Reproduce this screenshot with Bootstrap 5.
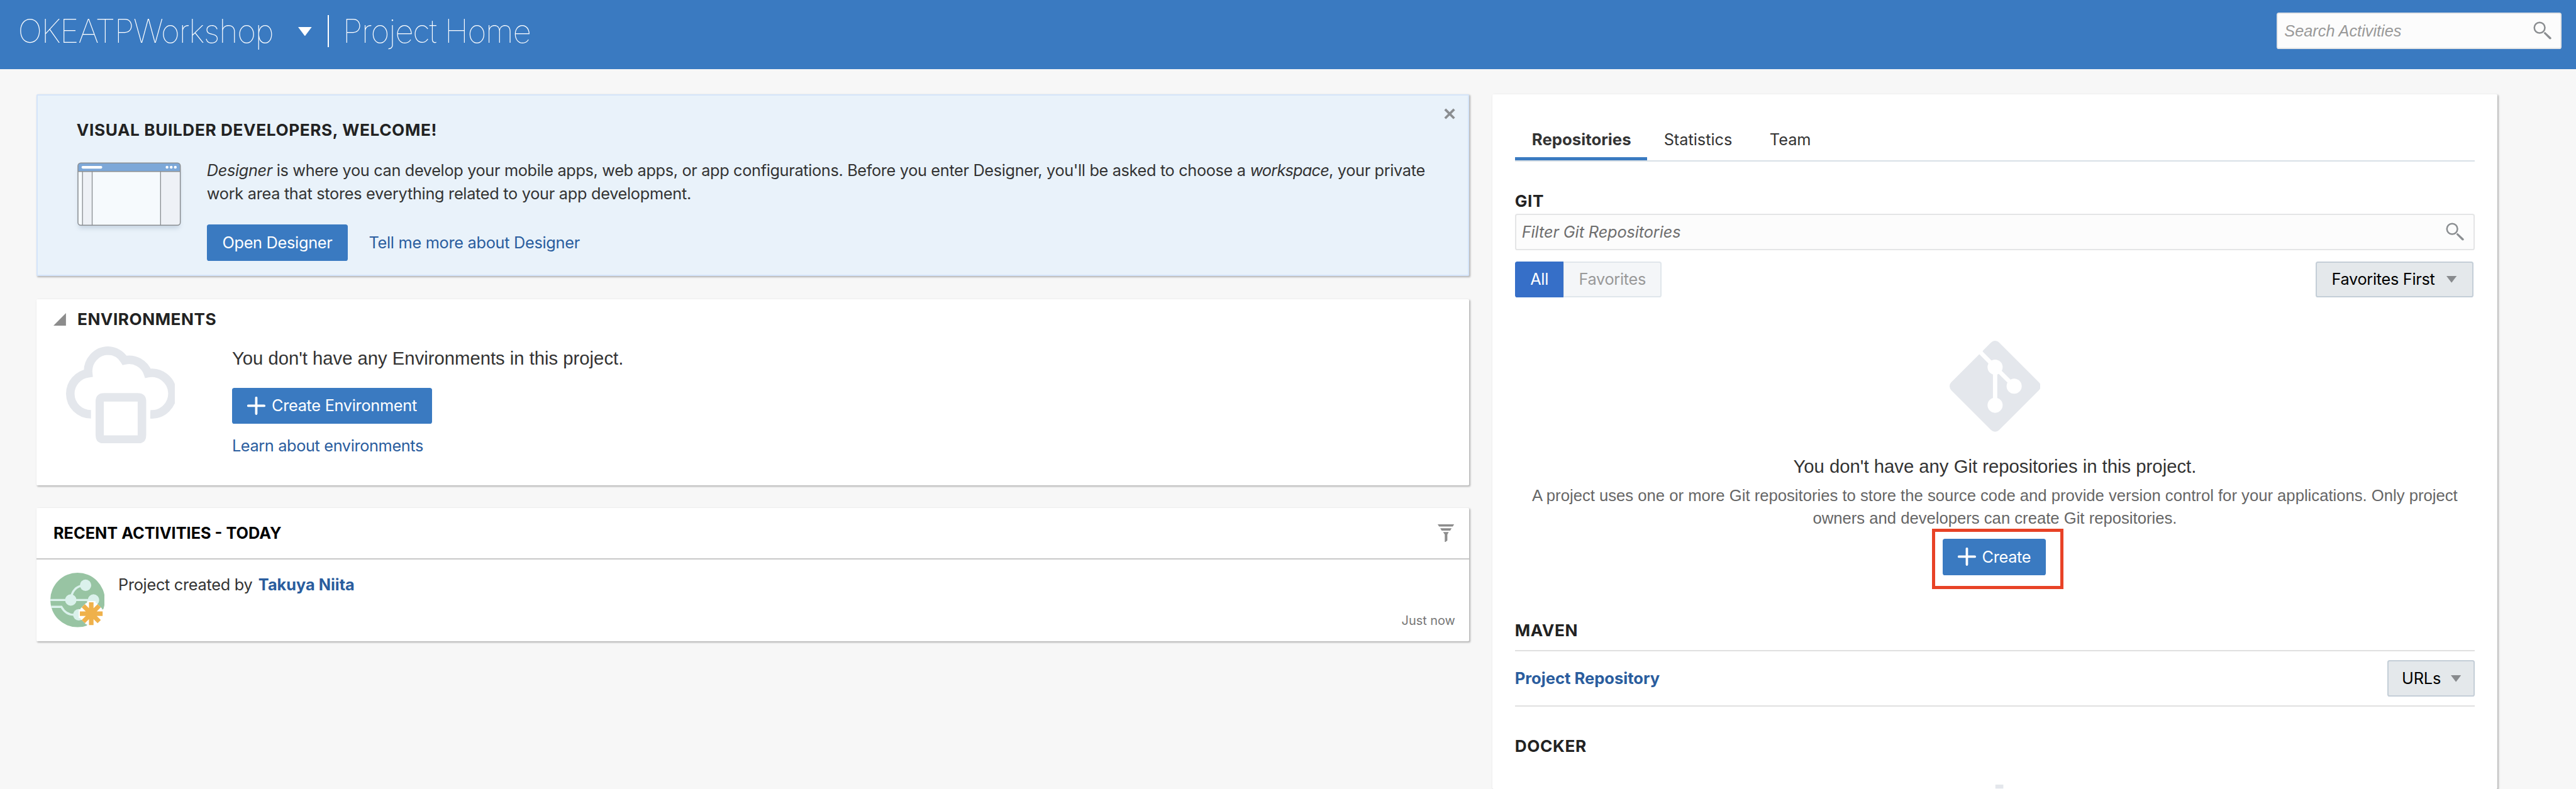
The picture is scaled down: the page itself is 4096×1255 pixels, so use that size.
<!DOCTYPE html>
<html lang="en">
<head>
<meta charset="utf-8">
<meta name="viewport" content="width=device-width, initial-scale=1">
<title>OKEATPWorkshop | Project Home</title>
<link href="https://cdn.jsdelivr.net/npm/bootstrap@5.3.0/dist/css/bootstrap.min.css" rel="stylesheet">
<style>
/* 1rem is 1/453 of the window width, so the whole page scales with it */
html{font-size:calc(100vw / 453)}
body{font:400 2.8rem/4rem Inter,"Liberation Sans",sans-serif;letter-spacing:-.032rem;color:#333;background:#f7f7f7;height:100vh;overflow:hidden}
svg{display:block;flex:none}
a{color:#2a5d9e;text-decoration:none}
.helv{font-family:"Liberation Sans",Arial,sans-serif;letter-spacing:0}

.topbar{height:12.2rem;background:#3a7ac1;padding:0 2.6rem 0 3.15rem;color:#fff}
.brand{gap:2.8rem;height:11rem}
.thin{font-weight:100;font-size:5.7rem;line-height:7.6rem;letter-spacing:-.135rem}
.vrule{width:2px;height:5.6rem;background:#fff}
.field{height:6.4rem;border:2px solid #e4e5e6;border-radius:.4rem;background:#fcfcfc;color:#6e6e6e;font-style:italic;padding:0 1.7rem 0 1rem}
.search{width:50rem;margin-top:2.2rem;color:#999;padding:0 1.5rem 0 1.1rem}

.page{padding:4.4rem 13.8rem 0 6.4rem;gap:4rem}
.main-col{width:252rem;gap:4rem}
.side-col{width:176.8rem;height:122.2rem;padding:4.96rem 4rem 0;overflow:hidden}
.panel{background:#fff;border-radius:.2rem;box-shadow:.2rem .2rem .3rem rgba(0,0,0,.27)}
.ttl{font-size:2.9rem;line-height:3.6rem;font-weight:700;letter-spacing:.065rem;color:#222;margin:0}
.btnx{height:6.4rem;border-radius:.4rem;border:0;font-size:2.8rem;line-height:4rem;padding:0;white-space:nowrap;display:inline-flex;align-items:center;justify-content:center;letter-spacing:-.032rem}
.btn-blue,.btn-blue:hover{background:#3a7ac1;color:#fff}
.btn-gray,.btn-gray:hover{background:#e4e8eb;border:2px solid #c4ced7;color:#000}

.welcome{height:32rem;background:#e9f2fa;border:2px solid #d5e5fa;padding:4.35rem 4rem 0 6.85rem}
.welcome-x{top:2.2rem;right:2.3rem;width:2rem}
.welcome-art{width:22.9rem}
.welcome-art svg{width:20.2rem;margin:-.4rem 0 0 -.9rem}
.env{height:32.8rem;padding:1.8rem 3rem 0}
.env-ttl{gap:2rem}
.env-art{width:31.4rem;padding:2.9rem 0 0 2.2rem}
.lead-line{font-size:3.24rem;line-height:4rem}
.recent{height:23.4rem}
.recent-head{height:9rem;border-bottom:2px solid #c8c8c8;padding:0 2.7rem 0 3rem}
.recent-head .ttl{font-size:2.8rem;letter-spacing:0;color:#000}
.recent-row{height:14.4rem;padding:2.4rem 2.5rem 0 2.4rem}
.by{margin:.25rem 0 0 2.4rem;line-height:3.6rem}
.stamp{font-size:2.2rem;line-height:3rem;color:#777;letter-spacing:0;margin-bottom:2.1rem}

.tabs{border-bottom:2px solid #d8e0e6}
.tabs .nav-link{height:6.64rem;padding:0 3rem;line-height:6.04rem;border-bottom:5px solid transparent;color:#333;letter-spacing:0}
.tabs .nav-link.active{font-weight:700;font-size:2.85rem;border-color:#3a7ac1;width:23.2rem;padding-right:0}
.seg-all{width:8.6rem;background:#366fc8;color:#fff;border-radius:.4rem 0 0 .4rem}
.seg-fav,.seg-fav:hover{width:17.2rem;background:#f4f6f8;border:2px solid #e0e6eb;border-left-width:1px;color:#999;border-radius:0 .4rem .4rem 0}
.blurb{font-size:2.838rem;color:#666;margin:1.1rem 0 0}
.callout-box{left:-1.9rem;top:-1.8rem;width:23.2rem;height:10.7rem;border:5px solid #e84226}
.maven-row{height:10rem;border:solid #e0e0e0;border-width:2px 0;margin-top:1.65rem}
.maven-row a{font-size:2.83rem;letter-spacing:0}
</style>
</head>
<body>
<svg width="0" height="0" class="position-absolute" aria-hidden="true">
  <symbol id="lens" viewBox="0 0 32 32"><circle cx="11.2" cy="11.2" r="9.3" fill="none" stroke="#8b8e91" stroke-width="2.8"/><path d="M18.3 20.8l2.4-2.4 10.5 9.9q1.2 1.6 0 2.8-1.3 1-2.8 0z" fill="#8b8e91"/></symbol>
  <symbol id="plus" viewBox="0 0 32 32"><path d="M16 2v28M2 16h28" stroke="#fff" stroke-width="4.2" stroke-linecap="round"/></symbol>
  <symbol id="down" viewBox="0 0 18 12"><path d="M0 0h18L9 12z" fill="#888b8e"/></symbol>
</svg>

<header class="topbar d-flex justify-content-between align-items-start">
  <div class="brand d-flex align-items-center">
    <span class="thin">OKEATPWorkshop</span>
    <svg viewBox="0 0 24 16" style="width:2.4rem;margin-left:1.6rem"><path d="M0 0h24L12 16z" fill="#fff"/></svg>
    <span class="vrule"></span>
    <span class="thin" style="margin-left:-.4rem;letter-spacing:-.14rem">Project Home</span>
  </div>
  <div class="field search helv d-flex align-items-center justify-content-between">
    <span>Search Activities</span>
    <svg style="width:3.2rem;height:3.2rem"><use href="#lens"/></svg>
  </div>
</header>

<main class="page d-flex align-items-start">
  <div class="main-col d-flex flex-column">

    <section class="panel welcome position-relative">
      <svg class="welcome-x position-absolute" viewBox="0 0 20 20"><path d="M2 2l16 16M18 2L2 18" stroke="#8b8e91" stroke-width="4.2"/></svg>
      <h2 class="ttl">VISUAL BUILDER DEVELOPERS, WELCOME!</h2>
      <div class="d-flex" style="margin-top:3.65rem">
        <div class="welcome-art">
          <svg viewBox="126 280 202 136">
            <defs><filter id="soft" x="-20%" y="-20%" width="140%" height="150%"><feGaussianBlur stdDeviation="4"/></filter>
            <clipPath id="win"><rect x="137" y="287" width="180" height="109.5" rx="5"/></clipPath></defs>
            <rect x="138" y="296" width="178" height="106" rx="5" fill="#9fb0c4" opacity=".45" filter="url(#soft)"/>
            <g clip-path="url(#win)">
              <path fill="#f6fafd" d="M137 287h180v110H137z"/>
              <path fill="#eef1f6" d="M145 302h17v95h-17zM282 302h36v95h-36z"/>
              <path fill="#7da8d8" d="M137 287h180v15H137z"/>
              <path d="M137 301.800h180M145 302v95M162 302v95M282.300 302v95" stroke="#8c9094" stroke-width="1.500"/>
            </g>
            <rect x="137" y="287" width="180" height="109.500" rx="5" fill="none" stroke="#8c9094" stroke-width="1.700"/>
            <path d="M145.500 294.500h32" stroke="#fff" stroke-width="4.500" stroke-linecap="round"/>
            <g fill="#fff"><circle cx="293.700" cy="294.500" r="2.500"/><circle cx="301" cy="294.500" r="2.500"/><circle cx="308.200" cy="294.500" r="2.500"/></g>
          </svg>
        </div>
        <div style="margin-top:-.4rem">
          <p class="m-0 text-nowrap"><span style="letter-spacing:-.038rem"><em>Designer</em> is where you can develop your mobile apps, web apps, or app configurations. Before you enter Designer, you'll be asked to choose a <em style="letter-spacing:-.085rem">workspace</em>, your private</span><br>work area that stores everything related to your app development.</p>
          <div class="d-flex align-items-center" style="margin-top:3.5rem;gap:3.7rem">
            <button class="btn btnx btn-blue" style="width:24.8rem">Open Designer</button>
            <a href="#">Tell me more about Designer</a>
          </div>
        </div>
      </div>
    </section>

    <section class="panel env">
      <div class="env-ttl d-flex align-items-center">
        <svg viewBox="0 0 22 22" style="width:2.2rem"><path d="M22 0v22H0z" fill="#8c8c8c"/></svg>
        <h2 class="ttl" style="letter-spacing:.055rem">ENVIRONMENTS</h2>
      </div>
      <div class="d-flex">
        <div class="env-art">
          <svg viewBox="116 609 192 171" style="width:19.2rem">
            <path d="M160 728.500A36.500 36.300 0 0 1 123.500 692.500A36.500 36.300 0 0 1 155 656.300A35.500 36 0 0 1 190 616.500A35 36 0 0 1 219 633.500A35 35 0 0 1 260 656.200A36.500 36.500 0 1 1 264 728.500" fill="none" stroke="#e4e7ec" stroke-width="15"/>
            <path fill="#fff" d="M160 696q0-13 13-13h79q12 0 12 13v90H160z"/>
            <path fill="#e4e7ec" fill-rule="evenodd" d="M183 691h59q15 0 15 15v59q0 15-15 15h-59q-15 0-15-15v-59q0-15 15-15zm-.500 15v59.500h59.500V706z"/>
          </svg>
        </div>
        <div style="padding-top:3.1rem">
          <div class="lead-line helv" style="font-size:3.235rem">You don't have any Environments in this project.</div>
          <button class="btn btnx btn-blue" style="width:35.2rem;margin-top:3.1rem;gap:1.1rem"><svg style="width:3.2rem;height:3.2rem"><use href="#plus"/></svg>Create Environment</button>
          <div style="margin-top:1.8rem;letter-spacing:-.04rem"><a href="#">Learn about environments</a></div>
        </div>
      </div>
    </section>

    <section class="panel recent">
      <div class="recent-head d-flex align-items-center justify-content-between">
        <h2 class="ttl">RECENT ACTIVITIES - TODAY</h2>
        <svg viewBox="0 0 29 32" style="width:2.9rem"><path fill="#8c8c8c" d="M0 0h29l-2.500 4h-24zM4.500 7h20l-2.500 4H7zM9.500 13.500h10L17 18v10.500L12.500 32V18z"/></svg>
      </div>
      <div class="recent-row d-flex align-items-start">
        <svg viewBox="0 0 96 96" style="width:9.6rem">
          <clipPath id="disc"><circle cx="48" cy="48" r="48"/></clipPath>
          <g clip-path="url(#disc)">
            <path fill="#98c4a3" d="M0 0h96v96H0z"/>
            <path d="M0 48h76M0 60h19.500Q27 74 42 74h8M36 48Q38 24 60 22" fill="none" stroke="#dbf1ec" stroke-width="3.800"/>
            <g fill="#dbf1ec"><circle cx="62" cy="22" r="10"/><circle cx="36" cy="48" r="10"/><circle cx="76" cy="48" r="10"/><circle cx="50" cy="74" r="10"/></g>
          </g>
          <g fill="none"><path d="M72 50v44M50 72h44M58 58l28 28M86 58L58 86" stroke="#fff" stroke-width="15" stroke-linejoin="round"/>
          <path d="M72 52v40M52 72h40M58 58l28 28M86 58L58 86" stroke="#efb14b" stroke-width="8"/></g>
        </svg>
        <div class="by flex-grow-1">Project created by <a href="#" class="fw-bold" style="letter-spacing:0;margin-left:.3rem">Takuya Niita</a></div>
        <span class="stamp align-self-end">Just now</span>
      </div>
    </section>
  </div>

  <aside class="side-col panel">
    <nav class="nav tabs">
      <a class="nav-link active" href="#">Repositories</a>
      <a class="nav-link" href="#" style="width:18.6rem">Statistics</a>
      <a class="nav-link" href="#">Team</a>
    </nav>

    <h2 class="ttl" style="margin-top:5.15rem">GIT</h2>
    <div class="field d-flex align-items-center justify-content-between" style="margin-top:.4rem;letter-spacing:-.012rem">
      <span>Filter Git Repositories</span>
      <svg style="width:3.2rem;height:3.2rem"><use href="#lens"/></svg>
    </div>
    <div class="d-flex" style="margin-top:2rem;padding-right:.2rem">
      <button class="btn btnx seg-all">All</button>
      <button class="btn btnx seg-fav">Favorites</button>
      <button class="btn btnx btn-gray ms-auto" style="width:27.8rem;gap:2rem;padding-right:.2rem">Favorites First<svg viewBox="0 0 18 12" style="width:1.8rem;height:1.2rem"><use href="#down"/></svg></button>
    </div>

    <div class="text-center d-flex flex-column align-items-center" style="padding-top:7.6rem">
      <svg viewBox="0 0 160 160" style="width:16rem">
        <rect x="20.500" y="20.500" width="119" height="119" rx="10" transform="rotate(45 80 80)" fill="#e4e7ec"/>
        <path d="M48 14l32 32.500L113.500 80M80 46.500v67" fill="none" stroke="#fff" stroke-width="7.600"/>
        <path d="M76.200 60V50h10l-2.500 10z" fill="#fff"/>
        <path d="M58.500 16l-4.500 4.500 5.500 3.500q-3.500-4 0-8z" fill="#fff"/>
        <g fill="#fff"><circle cx="80" cy="46.500" r="13.300"/><circle cx="113.500" cy="80" r="13.300"/><circle cx="80" cy="113.500" r="13.300"/></g>
      </svg>
      <div class="lead-line helv" style="margin-top:4.1rem">You don't have any Git repositories in this project.</div>
      <p class="blurb helv text-nowrap">A project uses one or more Git repositories to store the source code and provide version control for your applications. Only project<br>owners and developers can create Git repositories.</p>
      <div class="position-relative" style="margin:1.6rem .2rem 0 0;height:6.4rem">
        <button class="btn btnx btn-blue" style="width:18.2rem;gap:1.1rem"><svg style="width:3.2rem;height:3.2rem"><use href="#plus"/></svg>Create</button>
        <span class="callout-box position-absolute"></span>
      </div>
    </div>

    <h2 class="ttl" style="margin-top:7.95rem">MAVEN</h2>
    <div class="maven-row d-flex align-items-center justify-content-between">
      <a href="#" class="fw-bold">Project Repository</a>
      <button class="btn btnx btn-gray" style="width:15.4rem;gap:1.8rem;padding-left:.2rem;letter-spacing:-.02rem">URLs<svg viewBox="0 0 18 12" style="width:1.8rem;height:1.2rem"><use href="#down"/></svg></button>
    </div>
    <h2 class="ttl" style="margin-top:5.15rem">DOCKER</h2>
    <svg viewBox="0 0 160 7" style="width:16rem;height:.7rem;margin:4.95rem auto 0"><path fill="#e4e7ec" d="M80.500 0h14v7h-14z"/></svg>
  </aside>
</main>
<script src="https://cdn.jsdelivr.net/npm/bootstrap@5.3.0/dist/js/bootstrap.bundle.min.js"></script>
</body>
</html>
